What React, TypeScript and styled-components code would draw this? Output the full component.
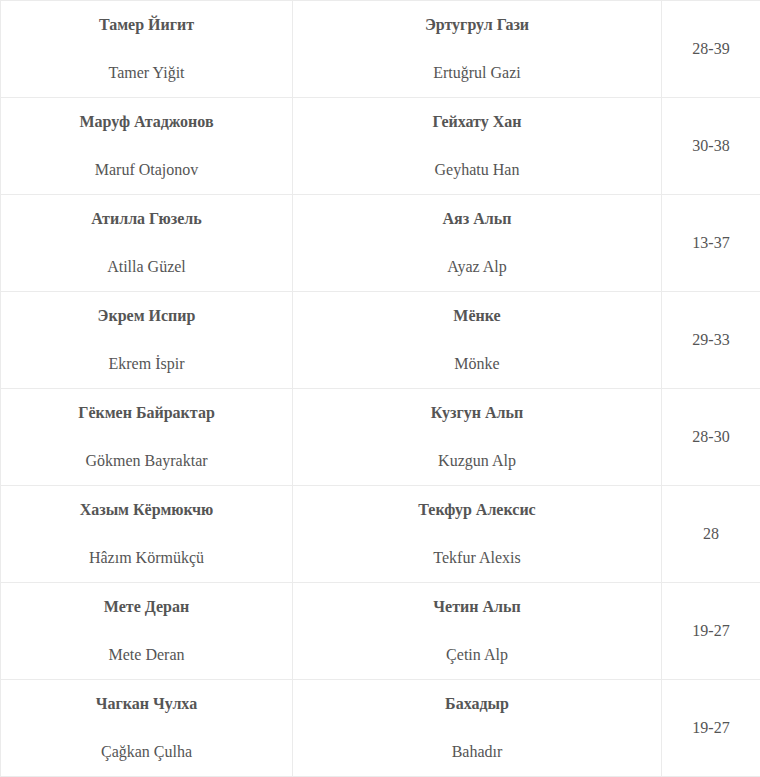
import React from "react";
import styled, { createGlobalStyle } from "styled-components";

const Global = createGlobalStyle`
  html, body { margin: 0; padding: 0; background: #fff; }
  body { font-family: "Liberation Serif", "Times New Roman", serif; color: #555; }
  *, *::before, *::after { box-sizing: border-box; }
`;

const Table = styled.table`
  width: 760px;
  border-collapse: collapse;
  table-layout: fixed;
  font-family: "Liberation Serif", "Times New Roman", serif;
  font-size: 16px;
  color: #555;
`;

const Col = styled.col<{ $w: number }>`
  width: ${(p) => p.$w}px;
`;

const Cell = styled.td`
  border: 1px solid #ebebeb;
  padding: 12px 8px;
  text-align: center;
  vertical-align: middle;
  line-height: 24px;
  font-family: "Liberation Serif", "Times New Roman", serif;
`;

const Name = styled.p<{ $bold?: boolean }>`
  margin: 0;
  font-weight: ${(p) => (p.$bold ? 700 : 400)};
  & + & { margin-top: 24px; }
`;

const rows = [
  ["Тамер Йигит", "Tamer Yiğit", "Эртугрул Гази", "Ertuğrul Gazi", "28-39"],
  ["Маруф Атаджонов", "Maruf Otajonov", "Гейхату Хан", "Geyhatu Han", "30-38"],
  ["Атилла Гюзель", "Atilla Güzel", "Аяз Альп", "Ayaz Alp", "13-37"],
  ["Экрем Испир", "Ekrem İspir", "Мёнке", "Mönke", "29-33"],
  ["Гёкмен Байрактар", "Gökmen Bayraktar", "Кузгун Альп", "Kuzgun Alp", "28-30"],
  ["Хазым Кёрмюкчю", "Hâzım Körmükçü", "Текфур Алексис", "Tekfur Alexis", "28"],
  ["Мете Деран", "Mete Deran", "Четин Альп", "Çetin Alp", "19-27"],
  ["Чагкан Чулха", "Çağkan Çulha", "Бахадыр", "Bahadır", "19-27"],
];

export default function App() {
  return (
    <>
      <Global />
      <Table>
        <colgroup>
          <Col $w={292} />
          <Col $w={369} />
          <Col $w={99} />
        </colgroup>
        <tbody>
          {rows.map((r, i) => (
            <tr key={i}>
              <Cell>
                <Name $bold>{r[0]}</Name>
                <Name>{r[1]}</Name>
              </Cell>
              <Cell>
                <Name $bold>{r[2]}</Name>
                <Name>{r[3]}</Name>
              </Cell>
              <Cell>{r[4]}</Cell>
            </tr>
          ))}
        </tbody>
      </Table>
    </>
  );
}
